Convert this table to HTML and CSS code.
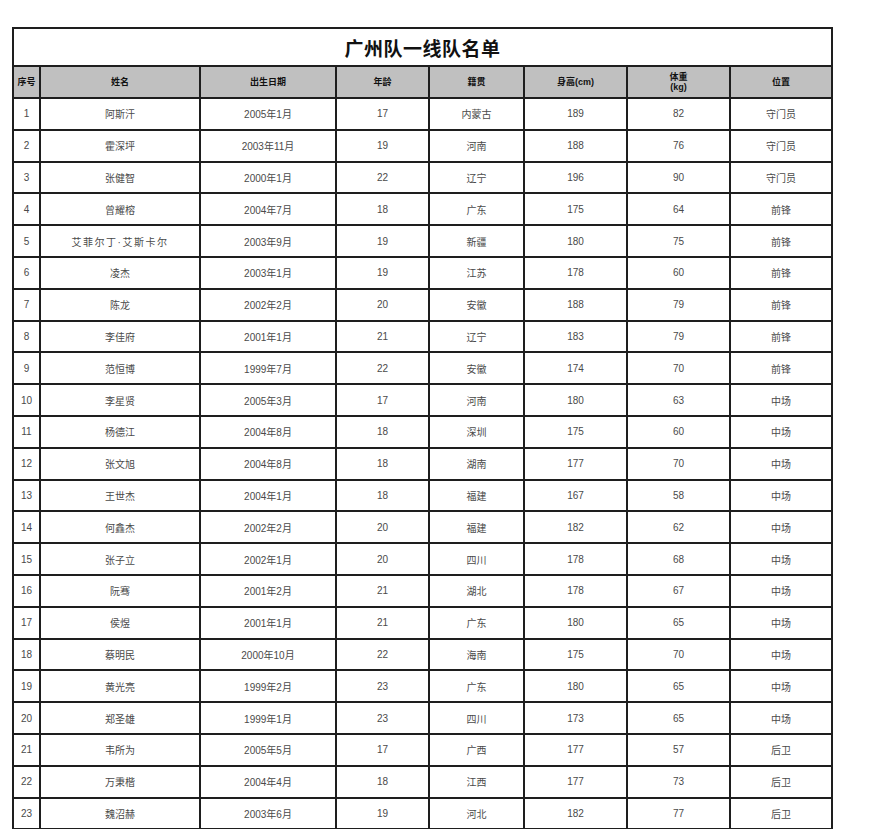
FILE: index.html
```html
<!DOCTYPE html>
<html lang="zh">
<head>
<meta charset="utf-8">
<title>广州队一线队名单</title>
<link rel="stylesheet" href="styles.css">
</head>
<body>
<table class="roster">
  <colgroup>
    <col class="c-no"><col class="c-name"><col class="c-date"><col class="c-age">
    <col class="c-home"><col class="c-h"><col class="c-w"><col class="c-pos">
  </colgroup>
  <thead>
    <tr class="title-row"><th colspan="8" class="title">广州队一线队名单</th></tr>
    <tr class="head-row">
      <th>序号</th><th>姓名</th><th>出生日期</th><th>年龄</th><th>籍贯</th><th>身高(cm)</th><th>体重<br>(kg)</th><th>位置</th>
    </tr>
  </thead>
  <tbody>
    <tr><td>1</td><td>阿斯汗</td><td>2005年1月</td><td>17</td><td>内蒙古</td><td>189</td><td>82</td><td>守门员</td></tr>
    <tr><td>2</td><td>霍深坪</td><td>2003年11月</td><td>19</td><td>河南</td><td>188</td><td>76</td><td>守门员</td></tr>
    <tr><td>3</td><td>张健智</td><td>2000年1月</td><td>22</td><td>辽宁</td><td>196</td><td>90</td><td>守门员</td></tr>
    <tr><td>4</td><td>曾耀榕</td><td>2004年7月</td><td>18</td><td>广东</td><td>175</td><td>64</td><td>前锋</td></tr>
    <tr><td>5</td><td class="wide">艾菲尔丁·艾斯卡尔</td><td>2003年9月</td><td>19</td><td>新疆</td><td>180</td><td>75</td><td>前锋</td></tr>
    <tr><td>6</td><td>凌杰</td><td>2003年1月</td><td>19</td><td>江苏</td><td>178</td><td>60</td><td>前锋</td></tr>
    <tr><td>7</td><td>陈龙</td><td>2002年2月</td><td>20</td><td>安徽</td><td>188</td><td>79</td><td>前锋</td></tr>
    <tr><td>8</td><td>李佳府</td><td>2001年1月</td><td>21</td><td>辽宁</td><td>183</td><td>79</td><td>前锋</td></tr>
    <tr><td>9</td><td>范恒博</td><td>1999年7月</td><td>22</td><td>安徽</td><td>174</td><td>70</td><td>前锋</td></tr>
    <tr><td>10</td><td>李星贤</td><td>2005年3月</td><td>17</td><td>河南</td><td>180</td><td>63</td><td>中场</td></tr>
    <tr><td>11</td><td>杨德江</td><td>2004年8月</td><td>18</td><td>深圳</td><td>175</td><td>60</td><td>中场</td></tr>
    <tr><td>12</td><td>张文旭</td><td>2004年8月</td><td>18</td><td>湖南</td><td>177</td><td>70</td><td>中场</td></tr>
    <tr><td>13</td><td>王世杰</td><td>2004年1月</td><td>18</td><td>福建</td><td>167</td><td>58</td><td>中场</td></tr>
    <tr><td>14</td><td>何鑫杰</td><td>2002年2月</td><td>20</td><td>福建</td><td>182</td><td>62</td><td>中场</td></tr>
    <tr><td>15</td><td>张子立</td><td>2002年1月</td><td>20</td><td>四川</td><td>178</td><td>68</td><td>中场</td></tr>
    <tr><td>16</td><td>阮骞</td><td>2001年2月</td><td>21</td><td>湖北</td><td>178</td><td>67</td><td>中场</td></tr>
    <tr><td>17</td><td>侯煜</td><td>2001年1月</td><td>21</td><td>广东</td><td>180</td><td>65</td><td>中场</td></tr>
    <tr><td>18</td><td>蔡明民</td><td>2000年10月</td><td>22</td><td>海南</td><td>175</td><td>70</td><td>中场</td></tr>
    <tr><td>19</td><td>黄光亮</td><td>1999年2月</td><td>23</td><td>广东</td><td>180</td><td>65</td><td>中场</td></tr>
    <tr><td>20</td><td>郑圣雄</td><td>1999年1月</td><td>23</td><td>四川</td><td>173</td><td>65</td><td>中场</td></tr>
    <tr><td>21</td><td>韦所为</td><td>2005年5月</td><td>17</td><td>广西</td><td>177</td><td>57</td><td>后卫</td></tr>
    <tr><td>22</td><td>万秉楷</td><td>2004年4月</td><td>18</td><td>江西</td><td>177</td><td>73</td><td>后卫</td></tr>
    <tr><td>23</td><td>魏沼赫</td><td>2003年6月</td><td>19</td><td>河北</td><td>182</td><td>77</td><td>后卫</td></tr>
  </tbody>
</table>
</body>
</html>
```

FILE: styles.css
```css
html, body {
  margin: 0;
  padding: 0;
  background: #ffffff;
}

body {
  padding: 27px 0 0 12px;
  font-family: "Liberation Sans", "Noto Sans CJK SC", sans-serif;
}

.roster {
  border-collapse: collapse;
  table-layout: fixed;
  width: 819px;
  border: 2px solid #1e1e1e;
}

.c-no { width: 27px; }
.c-name { width: 160px; }
.c-date { width: 136px; }
.c-age { width: 93px; }
.c-home { width: 95px; }
.c-h { width: 103px; }
.c-w { width: 103px; }
.c-pos { width: 102px; }

.roster th,
.roster td {
  border: 2px solid #1e1e1e;
  padding: 0;
  text-align: center;
  vertical-align: middle;
  overflow: hidden;
  white-space: nowrap;
}

.title-row {
  height: 38px;
}

.title {
  font-size: 19px;
  font-weight: bold;
  color: #111111;
  letter-spacing: 0.5px;
  border-bottom: 1px solid #555555;
}

.head-row {
  height: 32px;
}

.head-row th {
  background: #c0c0c0;
  font-size: 9px;
  font-weight: bold;
  color: #111111;
  line-height: 10px;
}

.roster tbody tr {
  height: 31.8px;
}

.roster td {
  font-size: 10px;
  color: #4a4a4a;
}

.roster td.wide {
  letter-spacing: 1.5px;
}
```
